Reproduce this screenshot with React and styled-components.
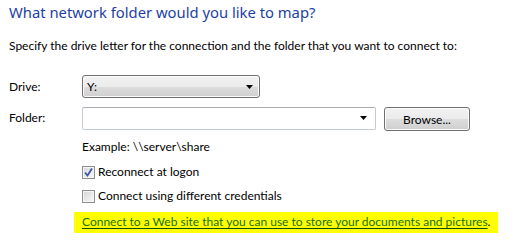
import React from 'react';
import styled, { createGlobalStyle } from 'styled-components';

const GlobalStyle = createGlobalStyle`
  html, body {
    margin: 0;
    padding: 0;
    background: #ffffff;
  }
  body {
    font-family: Lato, "Liberation Sans", sans-serif;
    font-size: 12px;
    color: #000000;
  }
`;

const Page = styled.div`
  width: 518px;
  height: 247px;
  box-sizing: border-box;
  padding: 2px 0 0 9px;
  overflow: hidden;
`;

const Title = styled.h1`
  margin: 0;
  font-family: "Noto Sans", sans-serif;
  font-weight: 400;
  font-size: 14.8px;
  line-height: 21px;
  color: #1d3fa6;
`;

const Intro = styled.p`
  margin: 15px 0 0 0;
  line-height: 16px;
`;

const FormGrid = styled.div`
  display: grid;
  grid-template-columns: 73px auto;
  row-gap: 7px;
  margin-top: 21px;
  align-items: center;
`;

const Label = styled.span`
  line-height: 16px;
`;

const FieldRow = styled.div`
  display: flex;
  align-items: center;
  gap: 8px;
`;

const Arrow = () => (
  <svg width="7" height="4" viewBox="0 0 7 4">
    <path d="M0 0 H7 L3.5 4 Z" fill="#000" />
  </svg>
);

const DropButton = styled.div`
  box-sizing: border-box;
  width: ${p => p.$width}px;
  height: 23px;
  display: flex;
  align-items: center;
  justify-content: space-between;
  padding: 0 6px 0 4px;
  border: 1px solid #707070;
  border-radius: 3px;
  background: linear-gradient(#f2f2f2 0%, #ebebeb 50%, #dddddd 51%, #cfcfcf 100%);
  box-shadow: inset 0 0 0 1px #fbfbfb;
`;

const EditCombo = styled.div`
  box-sizing: border-box;
  width: ${p => p.$width}px;
  height: 23px;
  display: flex;
  align-items: center;
  justify-content: flex-end;
  padding: 0 8px 0 4px;
  border: 1px solid #c5cbd3;
  border-top-color: #abadb3;
  border-radius: 2px;
  background: #ffffff;
`;

const Button = styled.button`
  box-sizing: border-box;
  width: 86px;
  height: 24px;
  margin-top: 2px;
  font: inherit;
  color: #000;
  border: 1px solid #707070;
  border-radius: 3px;
  background: linear-gradient(#f2f2f2 0%, #ebebeb 50%, #dddddd 51%, #cfcfcf 100%);
  box-shadow: inset 0 0 0 1px #fbfbfb;
  padding: 0;
`;

const Options = styled.div`
  display: flex;
  flex-direction: column;
  gap: 8px;
  margin: 8px 0 0 73px;
`;

const Example = styled.div`
  line-height: 16px;
  margin-bottom: 1px;
`;

const CheckRow = styled.label`
  display: flex;
  align-items: center;
  gap: 3px;
  line-height: 16px;
`;

const Box = styled.span`
  box-sizing: border-box;
  width: 13px;
  height: 13px;
  border: 1px solid #8f8f8f;
  background: #f4f4f4;
  display: flex;
  align-items: center;
  justify-content: center;
  padding: 1px;
`;

const BoxInner = styled.span`
  width: 100%;
  height: 100%;
  background: linear-gradient(135deg, #d8d8d8, #f6f6f6);
  display: flex;
  align-items: center;
  justify-content: center;
`;

const CheckBox = ({ checked }) => (
  <Box>
    <BoxInner>
      {checked && (
        <svg width="9" height="9" viewBox="0 0 9 9">
          <path d="M1 4.5 L3.5 7.5 L8 0.5" stroke="#3c58a8" strokeWidth="1.8" fill="none" />
        </svg>
      )}
    </BoxInner>
  </Box>
);

const LinkLine = styled.div`
  margin: 8px 0 0 65px;
  display: inline-block;
  background: #ffff00;
  padding: 2px 8px 3px 8px;
  line-height: 16px;
`;

const Link = styled.a`
  color: #17700f;
  text-decoration: underline;
  text-decoration-color: #0b4f0b;
  text-underline-offset: 2px;
`;

export default function App() {
  return (
    <>
      <GlobalStyle />
      <Page>
        <Title>What network folder would you like to map?</Title>
        <Intro>Specify the drive letter for the connection and the folder that you want to connect to:</Intro>
        <FormGrid>
          <Label>Drive:</Label>
          <FieldRow>
            <DropButton $width={178}>
              <span>Y:</span>
              <Arrow />
            </DropButton>
          </FieldRow>
          <Label>Folder:</Label>
          <FieldRow>
            <EditCombo $width={294}>
              <Arrow />
            </EditCombo>
            <Button>Browse...</Button>
          </FieldRow>
        </FormGrid>
        <Options>
          <Example>Example: \\server\share</Example>
          <CheckRow>
            <CheckBox checked />
            Reconnect at logon
          </CheckRow>
          <CheckRow>
            <CheckBox />
            Connect using different credentials
          </CheckRow>
        </Options>
        <LinkLine>
          <Link href="#">Connect to a Web site that you can use to store your documents and pictures</Link>.
        </LinkLine>
      </Page>
    </>
  );
}
